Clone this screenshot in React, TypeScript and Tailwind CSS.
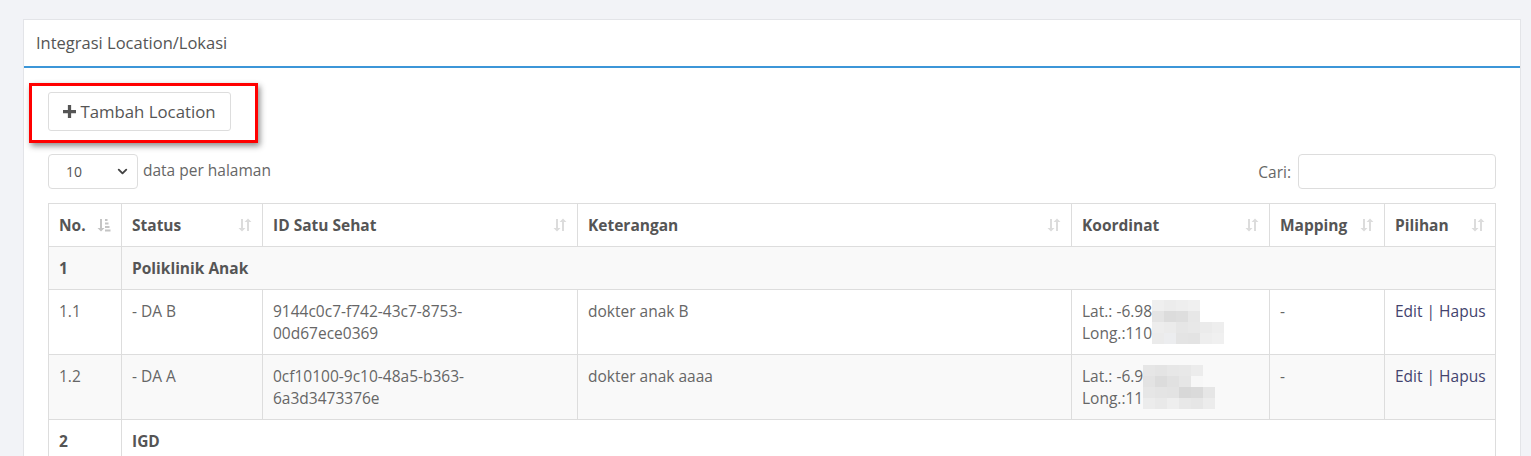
import { ChevronDown } from 'lucide-react';

type Mosaic = string[][];

const sortIcon = (active?: boolean) =>
    active ? (
        <svg width="14" height="14" viewBox="0 0 14 14" className="shrink-0">
            <path d="M3 1v9H0.5L4 13.5 7.5 10H5V1z" fill="#c4c4c4" />
            <rect x="8" y="1" width="2.5" height="2" fill="#c4c4c4" />
            <rect x="8" y="4.5" width="3.5" height="2" fill="#c4c4c4" />
            <rect x="8" y="8" width="4.5" height="2" fill="#c4c4c4" />
            <rect x="8" y="11.5" width="5.5" height="2" fill="#c4c4c4" />
        </svg>
    ) : (
        <svg width="14" height="14" viewBox="0 0 14 14" className="shrink-0">
            <path d="M3 1v9H0.5L4 13.5 7.5 10H5V1z" fill="#dcdcdc" />
            <path d="M9 13V4H6.5L10 0.5 13.5 4H11v9z" fill="#dcdcdc" />
        </svg>
    );

function Pixels({ cells }: { cells: Mosaic }) {
    return (
        <span className="inline-flex flex-col align-top">
            {cells.map((row, i) => (
                <span key={i} className="flex">
                    {row.map((c, j) => (
                        <span key={j} className="block w-[12px] h-[11px]" style={{ background: c }} />
                    ))}
                </span>
            ))}
        </span>
    );
}

const headers = [
    { label: 'No.', active: true },
    { label: 'Status' },
    { label: 'ID Satu Sehat' },
    { label: 'Keterangan' },
    { label: 'Koordinat' },
    { label: 'Mapping' },
    { label: 'Pilihan' },
];

const rows = [
    {
        no: '1.1',
        status: '- DA B',
        id: ['9144c0c7-f742-43c7-8753-', '00d67ece0369'],
        ket: 'dokter anak B',
        lat: 'Lat.: -6.98',
        lng: 'Long.:110',
        latPx: [
            ['#efefef', '#ececec', '#eeeeee', '#f0f0f0'],
            ['#e4e4e4', '#dcdcdc', '#dedede', '#e7e7e7'],
        ],
        lngPx: [
            ['#ededed', '#ebebeb', '#e6e6e6', '#e8e8e8', '#ebebeb', '#eeeeee'],
            ['#ebebeb', '#ecedef', '#e4e4e4', '#e3e3e3', '#eeeeee', '#f0f0f0'],
        ],
        striped: false,
    },
    {
        no: '1.2',
        status: '- DA A',
        id: ['0cf10100-9c10-48a5-b363-', '6a3d3473376e'],
        ket: 'dokter anak aaaa',
        lat: 'Lat.: -6.9',
        lng: 'Long.:11',
        latPx: [
            ['#e6e6e6', '#e4e4e4', '#e7e7e7', '#e8e8e8', '#ececec'],
            ['#e3e3e3', '#dcdcdc', '#e1e1e1', '#e6e6e6', '#f7f7f7'],
        ],
        lngPx: [
            ['#e6e6e6', '#e4e4e4', '#e3e3e3', '#d8d8d8', '#dadada', '#e6e6e6'],
            ['#ececec', '#e9e9e9', '#eeeeee', '#e8e8e8', '#e6e6e6', '#ececec'],
        ],
        striped: true,
    },
];

const cell = 'border border-[#dddddd] px-[10px] py-[10px] align-top';

export default function App() {
    return (
        <div
            className="min-h-screen bg-[#f2f3f7] pl-[23px] pt-[19px] text-[15.5px] leading-[22px] text-[#666666]"
            style={{ fontFamily: '"Open Sans", "Liberation Sans", sans-serif' }}
        >
            <div className="w-[1498px] bg-white border border-[#e3e4e8] border-b-0">
                {/* Header */}
                <div className="h-[48px] px-[12px] flex items-center border-b-2 border-[#3c96d8] text-[16.5px] text-[#555555]">
                    Integrasi Location/Lokasi
                </div>

                <div className="px-[24px] pt-[24px]">
                    {/* Tombol tambah + penanda merah */}
                    <div className="relative">
                        <button className="h-[39px] w-[183px] flex items-center justify-center gap-[4px] border border-[#dddddd] rounded-[3px] bg-white text-[16.8px] text-[#555555]">
                            <svg width="13" height="13" viewBox="0 0 12 12">
                                <path d="M4.5 0h3v4.5H12v3H7.5V12h-3V7.5H0v-3h4.5z" fill="#555555" />
                            </svg>
                            Tambah Location
                        </button>
                        <div className="absolute left-[-19px] top-[-9px] w-[229px] h-[60px] border-[3px] border-[#ff0000] shadow-[2px_3px_6px_rgba(0,0,0,0.45)] pointer-events-none" />
                    </div>

                    {/* Kontrol tabel */}
                    <div className="mt-[23px] flex items-center justify-between">
                        <div className="flex items-center gap-[5px]">
                            <div className="w-[90px] h-[35px] border border-[#dddddd] rounded-[4px] flex items-center justify-between pl-[17px] pr-[7px] text-[14px] text-[#555555]">
                                <span>10</span>
                                <ChevronDown className="w-[15px] h-[15px] text-[#444444]" strokeWidth={3} />
                            </div>
                            <span className="mt-[-4px]">data per halaman</span>
                        </div>
                        <div className="flex items-center gap-[7px]">
                            <span>Cari:</span>
                            <div className="w-[198px] h-[35px] border border-[#dddddd] rounded-[4px]" />
                        </div>
                    </div>

                    {/* Tabel */}
                    <table className="mt-[14px] w-[1447px] table-fixed border-collapse">
                        <colgroup>
                            <col className="w-[73px]" />
                            <col className="w-[141px]" />
                            <col className="w-[315px]" />
                            <col className="w-[494px]" />
                            <col className="w-[198px]" />
                            <col className="w-[115px]" />
                            <col className="w-[111px]" />
                        </colgroup>
                        <thead>
                            <tr>
                                {headers.map((h) => (
                                    <th key={h.label} className={`${cell} text-left font-bold text-[#555555]`}>
                                        <div className="flex items-center justify-between">
                                            <span>{h.label}</span>
                                            {sortIcon(h.active)}
                                        </div>
                                    </th>
                                ))}
                            </tr>
                        </thead>
                        <tbody>
                            <tr className="bg-[#f9f9f9]">
                                <td className={`${cell} font-bold text-[#555555]`}>1</td>
                                <td colSpan={6} className={`${cell} font-bold text-[#555555]`}>
                                    Poliklinik Anak
                                </td>
                            </tr>
                            {rows.map((r) => (
                                <tr key={r.no} className={r.striped ? 'bg-[#f9f9f9]' : 'bg-white'}>
                                    <td className={cell}>{r.no}</td>
                                    <td className={cell}>{r.status}</td>
                                    <td className={cell}>
                                        {r.id[0]}
                                        <br />
                                        {r.id[1]}
                                    </td>
                                    <td className={cell}>{r.ket}</td>
                                    <td className={cell}>
                                        <div className="flex items-center h-[22px]">
                                            {r.lat}
                                            <Pixels cells={r.latPx} />
                                        </div>
                                        <div className="flex items-center h-[22px]">
                                            {r.lng}
                                            <Pixels cells={r.lngPx} />
                                        </div>
                                    </td>
                                    <td className={cell}>-</td>
                                    <td className={`${cell} pr-0 whitespace-nowrap text-[#43436e]`}>Edit | Hapus</td>
                                </tr>
                            ))}
                            <tr className="bg-white">
                                <td className={`${cell} font-bold text-[#555555]`}>2</td>
                                <td colSpan={6} className={`${cell} font-bold text-[#555555]`}>
                                    IGD
                                </td>
                            </tr>
                        </tbody>
                    </table>
                </div>
            </div>
        </div>
    );
}
